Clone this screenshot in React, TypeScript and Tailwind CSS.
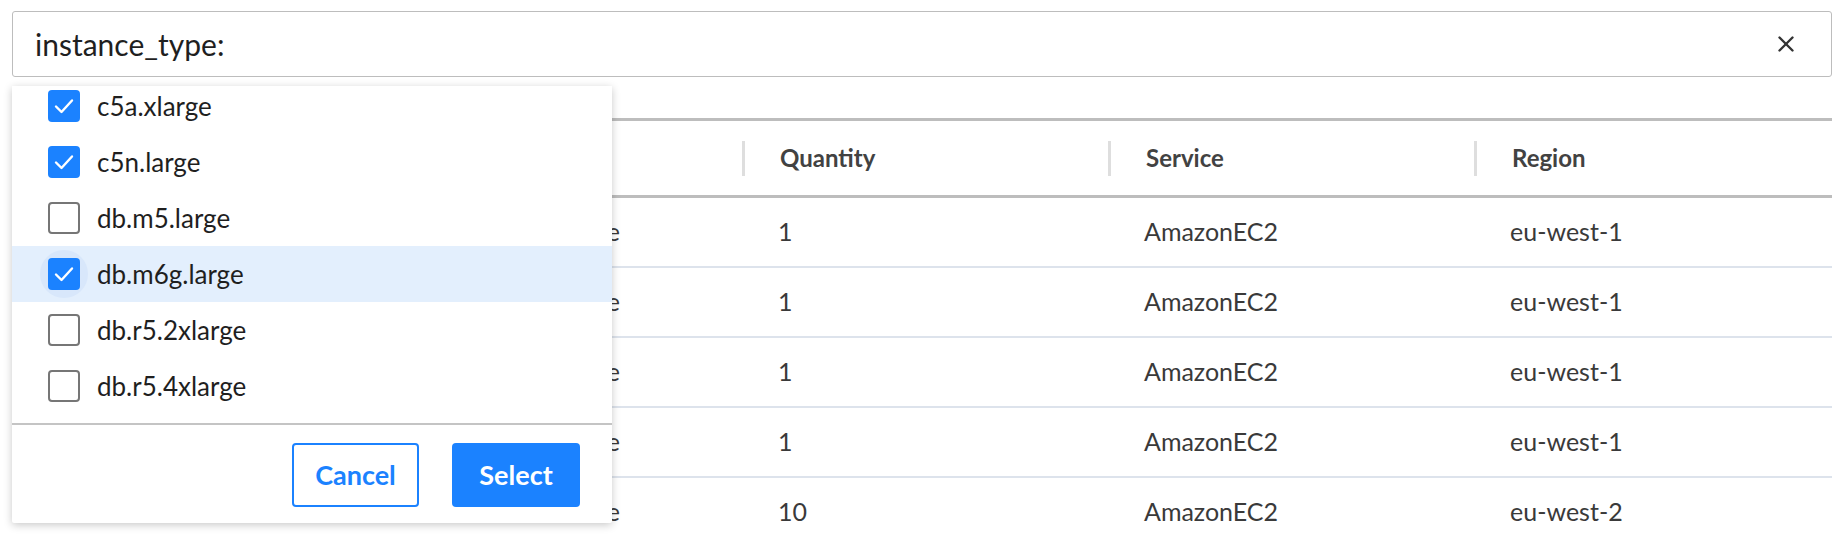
import { X } from 'lucide-react';

const options = [
    { label: 'c5a.xlarge', checked: true },
    { label: 'c5n.large', checked: true },
    { label: 'db.m5.large', checked: false },
    { label: 'db.m6g.large', checked: true, active: true },
    { label: 'db.r5.2xlarge', checked: false },
    { label: 'db.r5.4xlarge', checked: false },
];

const rows = [
    { usage: 'Reserved Instance', qty: '1', service: 'AmazonEC2', region: 'eu-west-1' },
    { usage: 'Reserved Instance', qty: '1', service: 'AmazonEC2', region: 'eu-west-1' },
    { usage: 'Reserved Instance', qty: '1', service: 'AmazonEC2', region: 'eu-west-1' },
    { usage: 'Reserved Instance', qty: '1', service: 'AmazonEC2', region: 'eu-west-1' },
    { usage: 'Reserved Instance', qty: '10', service: 'AmazonEC2', region: 'eu-west-2' },
];

function Checkbox({ checked }: { checked: boolean }) {
    if (checked) {
        return (
            <span className="w-8 h-8 rounded-[4px] bg-[#1b82ff] flex items-center justify-center">
                <svg width="32" height="32" viewBox="0 0 32 32" fill="none">
                    <polyline points="8,16.5 13.5,22 24,10.5" stroke="white" strokeWidth="2.4" strokeLinecap="round" strokeLinejoin="round" />
                </svg>
            </span>
        );
    }
    return <span className="block w-8 h-8 rounded-[4px] border-2 border-[#767676] bg-white" />;
}

export default function App() {
    return (
        <div className="w-[1844px] h-[546px] bg-white relative overflow-hidden font-['Lato',sans-serif]">
            {/* Filter input */}
            <div className="pt-[11px] pl-[12px] pr-[12px]">
                <div className="h-[66px] border border-[#bdbdbd] rounded-[3px] flex items-center justify-between pl-[22px] pr-[32px]">
                    <span className="text-[30px] text-[#1f1f1f]">instance_type:</span>
                    <X className="w-[26px] h-[26px] text-[#333]" strokeWidth={2.2} />
                </div>
            </div>

            {/* Table */}
            <div className="mt-[41px] pl-[12px] pr-[12px]">
                <div className="border-t-[3px] border-b-[3px] border-[#bdbdbd] h-[80px] grid grid-cols-[364px_366px_366px_366px_1fr] items-center text-[24px] font-bold text-[#424242]">
                    <div />
                    <div className="h-[35px] border-l-[3px] border-[#dedede]" />
                    <div className="h-[35px] border-l-[3px] border-[#dedede] pl-[35px] flex items-center">Quantity</div>
                    <div className="h-[35px] border-l-[3px] border-[#dedede] pl-[35px] flex items-center">Service</div>
                    <div className="h-[35px] border-l-[3px] border-[#dedede] pl-[35px] flex items-center">Region</div>
                </div>
                {rows.map((r, i) => (
                    <div key={i} className="h-[70px] border-b-2 border-[#dde3ec] grid grid-cols-[364px_366px_366px_366px_1fr] items-center text-[25px] text-[#3a3a3a]">
                        <div />
                        <div className="text-right pr-[122px] whitespace-nowrap">{r.usage}</div>
                        <div className="pl-[36px]">{r.qty}</div>
                        <div className="pl-[36px]">{r.service}</div>
                        <div className="pl-[36px]">{r.region}</div>
                    </div>
                ))}
            </div>

            {/* Dropdown menu */}
            <div className="absolute left-[12px] top-[86px] w-[600px] bg-white shadow-[0_2px_8px_rgba(0,0,0,0.22)] rounded-b-[2px]">
                <div className="h-[337px] overflow-hidden">
                    <div className="-mt-2">
                        {options.map(o => (
                            <div key={o.label} className={`h-14 flex items-center pl-[24px] ${o.active ? 'bg-[#e3effd]' : ''}`}>
                                <div className="relative w-14 h-14 flex items-center justify-center">
                                    {o.active && <span className="absolute inset-1 rounded-full bg-[#d8e7fb]" />}
                                    <span className="relative"><Checkbox checked={o.checked} /></span>
                                </div>
                                <span className="ml-[5px] text-[26px] text-[#1f1f1f]">{o.label}</span>
                            </div>
                        ))}
                    </div>
                </div>
                <div className="border-t-2 border-[#c4c4c4] flex justify-end gap-[33px] pt-[18px] pb-[16px] pr-[32px]">
                    <button className="w-[127px] h-[64px] border-2 border-[#1b82ff] rounded-[4px] text-[27px] font-bold text-[#1b82ff] bg-white">Cancel</button>
                    <button className="w-[128px] h-[64px] rounded-[4px] text-[27px] font-bold text-white bg-[#1b82ff]">Select</button>
                </div>
            </div>
        </div>
    );
}
